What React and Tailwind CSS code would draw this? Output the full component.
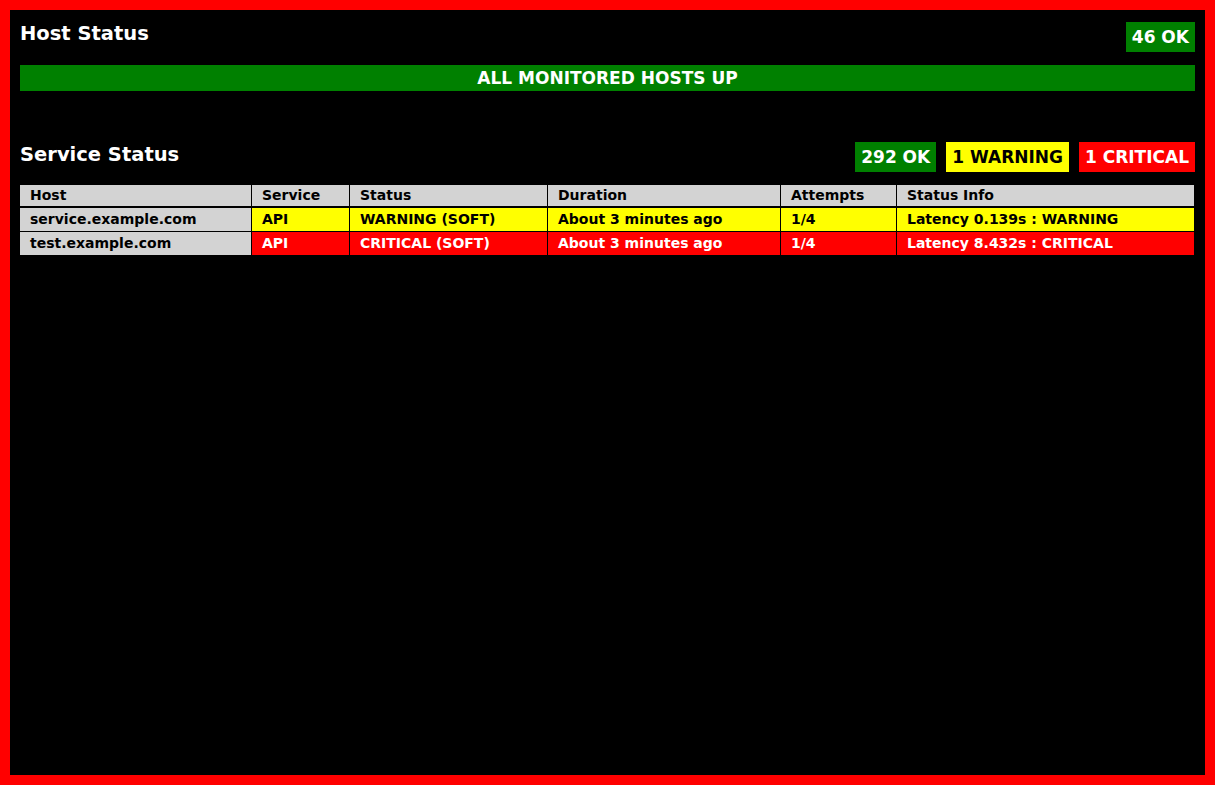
import React from "react";

const font = { fontFamily: '"DejaVu Sans", Verdana, sans-serif' };

const cols = [
  { key: "host", label: "Host", w: "w-[232px]" },
  { key: "service", label: "Service", w: "w-[98px]" },
  { key: "status", label: "Status", w: "w-[198px]" },
  { key: "duration", label: "Duration", w: "w-[233px]" },
  { key: "attempts", label: "Attempts", w: "w-[116px]" },
  { key: "info", label: "Status Info", w: "flex-1" },
];

const rows = [
  {
    host: "service.example.com",
    service: "API",
    status: "WARNING (SOFT)",
    duration: "About 3 minutes ago",
    attempts: "1/4",
    info: "Latency 0.139s : WARNING",
    tone: "bg-[#ffff00] text-black",
  },
  {
    host: "test.example.com",
    service: "API",
    status: "CRITICAL (SOFT)",
    duration: "About 3 minutes ago",
    attempts: "1/4",
    info: "Latency 8.432s : CRITICAL",
    tone: "bg-[#ff0000] text-white",
  },
];

function Badge({ children, cls }) {
  return (
    <div className={`h-[30px] px-[6px] text-[17px] leading-[30px] font-bold ${cls}`}>
      {children}
    </div>
  );
}

export default function App() {
  return (
    <div
      style={font}
      className="h-[785px] w-[1215px] border-[10px] border-[#ff0000] bg-black p-[10px] text-white"
    >
      <div className="flex items-start justify-between">
        <h2 className="mt-[2px] text-[19.5px] leading-6 font-bold">Host Status</h2>
        <div className="mt-[2px]">
          <Badge cls="bg-[#008000] text-white">46 OK</Badge>
        </div>
      </div>
      <div className="mt-[13px] h-[26px] bg-[#008000] text-center text-[17px] leading-[26px] font-bold text-white">
        ALL MONITORED HOSTS UP
      </div>

      <div className="mt-[51px] flex items-start justify-between">
        <h2 className="mt-[1px] text-[19.5px] leading-6 font-bold">Service Status</h2>
        <div className="flex gap-[10px]">
          <Badge cls="bg-[#008000] text-white">292 OK</Badge>
          <Badge cls="bg-[#ffff00] text-black">1 WARNING</Badge>
          <Badge cls="bg-[#ff0000] text-white">1 CRITICAL</Badge>
        </div>
      </div>

      <div className="mt-[13px] w-[1174px]">
        <div className="flex h-[23px] border-b-2 border-black bg-[#d3d3d3] text-black">
          {cols.map((c, i) => (
            <div
              key={c.key}
              className={`${c.w} ${i < cols.length - 1 ? "border-r border-black" : ""} px-[10px] text-[14px] leading-[21px] font-bold whitespace-nowrap`}
            >
              {c.label}
            </div>
          ))}
        </div>
        {rows.map((r) => (
          <div key={r.host} className="flex h-[24px] border-b border-dotted border-black">
            {cols.map((c, i) => (
              <div
                key={c.key}
                className={`${c.w} ${i < cols.length - 1 ? "border-r border-black" : ""} ${
                  c.key === "host" ? "bg-[#d3d3d3] text-black" : r.tone
                } px-[10px] text-[14px] leading-[23px] font-bold whitespace-nowrap`}
              >
                {r[c.key]}
              </div>
            ))}
          </div>
        ))}
      </div>
    </div>
  );
}
